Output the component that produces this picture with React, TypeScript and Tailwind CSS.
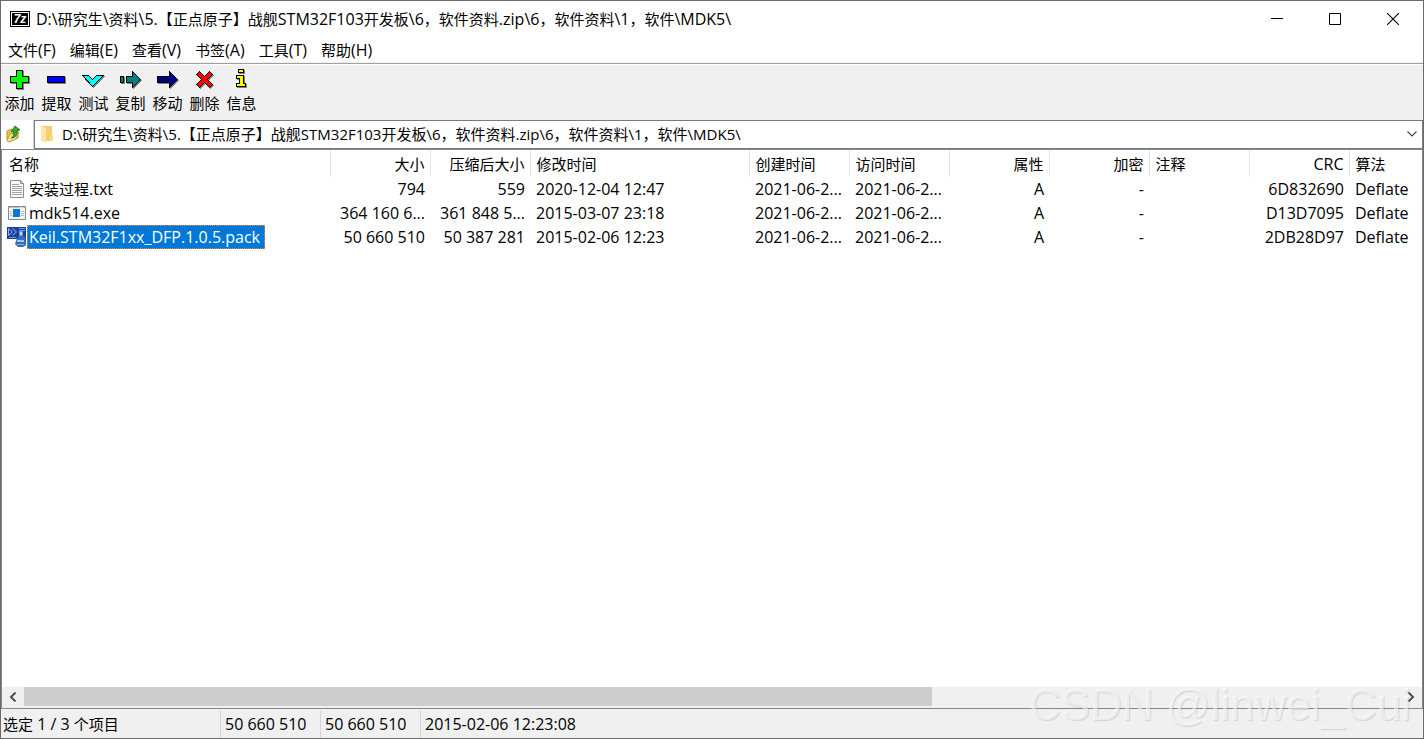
import React from 'react';

type FileRow = {
  icon: React.ReactNode;
  name: string;
  size: string;
  packed: string;
  modified: string;
  crc: string;
  selected?: boolean;
};

const archivePath =
  'D:\\研究生\\资料\\5.【正点原子】战舰STM32F103开发板\\6，软件资料.zip\\6，软件资料\\1，软件\\MDK5\\';

const menus = ['文件(F)', '编辑(E)', '查看(V)', '书签(A)', '工具(T)', '帮助(H)'];

// Latin runs are set one pixel larger than the Chinese text around them
function MixedText({ text }: { text: string }) {
  const runs = text.match(/[\x20-\x7e]+|[^\x20-\x7e]+/g) ?? [];
  return (
    <>
      {runs.map((run, index) => (
        <span key={index} className={run.charCodeAt(0) < 127 ? 'text-[16px] whitespace-pre' : 'text-[15px]'}>
          {run}
        </span>
      ))}
    </>
  );
}

// Toolbar glyphs share a 23x22 grid: a grey drop shadow under a black-outlined shape
function ToolIcon({ shapes, fill }: { shapes: string[]; fill: string }) {
  return (
    <svg viewBox="0 0 23 22" className="h-[22px] w-[23px]" aria-hidden="true">
      {shapes.map((points) => (
        <polygon key={`s${points}`} points={points} fill="#808080" stroke="#808080" transform="translate(1 1)" shapeRendering="crispEdges" />
      ))}
      {shapes.map((points) => (
        <polygon key={points} points={points} fill={fill} stroke="#000" shapeRendering="crispEdges" />
      ))}
    </svg>
  );
}

const tools = [
  { label: '添加', fill: '#00ff00', shapes: ['8.5,2.5 14.5,2.5 14.5,8.5 20.5,8.5 20.5,14.5 14.5,14.5 14.5,20.5 8.5,20.5 8.5,14.5 2.5,14.5 2.5,8.5 8.5,8.5'] },
  { label: '提取', fill: '#0000ff', shapes: ['2.5,8.5 19.5,8.5 19.5,14.5 2.5,14.5'] },
  { label: '测试', fill: '#00ffff', shapes: ['0.5,7.5 6.5,7.5 10.5,11.5 14.5,7.5 21.5,7.5 10.5,18.5'] },
  { label: '复制', fill: '#008080', shapes: ['1.5,8.5 4.5,8.5 4.5,14.5 1.5,14.5', '7.5,8.5 13.5,8.5 13.5,3.5 21.5,11.5 13.5,19.5 13.5,14.5 7.5,14.5'] },
  { label: '移动', fill: '#000080', shapes: ['1.5,8.5 13.5,8.5 13.5,3.5 21.5,11.5 13.5,19.5 13.5,14.5 1.5,14.5'] },
  { label: '删除', fill: '#ff0000', shapes: ['6.5,3.5 11.5,8.5 16.5,3.5 19.5,6.5 14.5,11.5 19.5,16.5 16.5,19.5 11.5,14.5 6.5,19.5 3.5,16.5 8.5,11.5 3.5,6.5'] },
  { label: '信息', fill: '#ffff00', shapes: ['8.5,1.5 13.5,1.5 13.5,4.5 8.5,4.5', '6.5,7.5 13.5,7.5 13.5,15.5 15.5,15.5 15.5,18.5 6.5,18.5 6.5,15.5 9.5,15.5 9.5,10.5 6.5,10.5'] },
];

function TextFileIcon() {
  return (
    <svg viewBox="0 0 20 20" className="size-5 shrink-0" aria-hidden="true">
      <path d="M3.500 1.500H13.500L16.500 4.500V18.500H3.500Z" fill="#fafafa" stroke="#8c8c8c" />
      <path d="M13.500 1.500V4.500H16.500" fill="none" stroke="#8c8c8c" />
      <path d="M5 5.500H12M5 7.500H15M5 9.500H15M5 11.500H15M5 13.500H15M5 15.500H15" stroke="#a3a3a3" />
    </svg>
  );
}

function ProgramIcon() {
  return (
    <svg viewBox="0 0 20 20" className="size-5 shrink-0" aria-hidden="true">
      <path d="M1.500 3.500H18.500V16.500H1.500Z" fill="#f4f4f4" stroke="#7f8a93" />
      <path d="M2 4.500H18" stroke="#b8c0c6" />
      <path d="M13 4.500H14M15 4.500H16" stroke="#fff" />
      <path d="M6 6H13V14H6Z" fill="#0078d7" />
      <path d="M3 8.500H5M3 10.500H5M3 12.500H5M14 8.500H17M14 10.500H17M14 12.500H17" stroke="#b4b9bd" />
    </svg>
  );
}

function PackIcon() {
  return (
    <svg viewBox="0 0 20 20" className="size-5 shrink-0" aria-hidden="true">
      <path d="M0 0H19V12H0Z" fill="#1b3fa0" />
      <path d="M1.500 1.500L5.500 5L1.500 8.500ZM5.500 1.500L9.500 5L5.500 8.500" fill="none" stroke="#8fb4ea" />
      <path d="M2 10.500H9" stroke="#6f9be0" />
      <path d="M12 1.500H18M12 3.500H18" stroke="#6f9be0" />
      <path d="M12 4L16 3V9L12 11Z" fill="#5f9bd8" />
      <path d="M10 11L13 9H17L19 12V18L16 20H11L8 17Z" fill="#2f6cba" />
      <path d="M13 5H15V8H13Z" fill="#b9d9f5" />
      <path d="M10 13H17V15H10Z" fill="#9cc7ee" />
      <path d="M10 17H17V18H10Z" fill="#7fb1e4" />
    </svg>
  );
}

const files: FileRow[] = [
  { icon: <TextFileIcon />, name: '安装过程.txt', size: '794', packed: '559', modified: '2020-12-04 12:47', crc: '6D832690' },
  { icon: <ProgramIcon />, name: 'mdk514.exe', size: '364 160 6...', packed: '361 848 5...', modified: '2015-03-07 23:18', crc: 'D13D7095' },
  { icon: <PackIcon />, name: 'Keil.STM32F1xx_DFP.1.0.5.pack', size: '50 660 510', packed: '50 387 281', modified: '2015-02-06 12:23', crc: '2DB28D97', selected: true },
];

const columns = [
  { label: '名称', width: 'w-[328px]', align: 'pl-[7px] text-left' },
  { label: '大小', width: 'w-[100px]', align: 'pr-[5px] text-right' },
  { label: '压缩后大小', width: 'w-[100px]', align: 'pr-[5px] text-right' },
  { label: '修改时间', width: 'w-[219px]', align: 'pl-[6px] text-left' },
  { label: '创建时间', width: 'w-[100px]', align: 'pl-[6px] text-left' },
  { label: '访问时间', width: 'w-[100px]', align: 'pl-[6px] text-left' },
  { label: '属性', width: 'w-[100px]', align: 'pr-[5px] text-right' },
  { label: '加密', width: 'w-[100px]', align: 'pr-[5px] text-right' },
  { label: '注释', width: 'w-[100px]', align: 'pl-[6px] text-left' },
  { label: 'CRC', width: 'w-[100px]', align: 'pr-[5px] text-right' },
  { label: '算法', width: 'w-auto', align: 'pl-[6px] text-left' },
];

function TitleBar() {
  return (
    <header className="flex h-9 items-center bg-white pr-px pl-[9px]">
      <span className="flex h-4 w-5 shrink-0 border border-black bg-white p-px">
        <span className="flex flex-1 items-center justify-center bg-black font-['Liberation_Sans'] text-[12px] leading-3 font-bold text-white italic">
          7z
        </span>
      </span>
      <h1 className="min-w-0 flex-1 truncate pl-[6px]">
        <MixedText text={archivePath} />
      </h1>
      <button type="button" aria-label="最小化" className="flex h-9 w-[58px] items-center justify-center">
        <svg viewBox="0 0 12 12" className="size-3"><path d="M0 5.500H12" stroke="#000" /></svg>
      </button>
      <button type="button" aria-label="最大化" className="flex h-9 w-[58px] items-center justify-center">
        <svg viewBox="0 0 12 12" className="size-3"><path d="M.5.5H11.500V11.500H.5Z" fill="none" stroke="#000" /></svg>
      </button>
      <button type="button" aria-label="关闭" className="flex h-9 w-[58px] items-center justify-center">
        <svg viewBox="0 0 12 12" className="size-3"><path d="M0 0L12 12M12 0L0 12" stroke="#000" strokeWidth="1.1" /></svg>
      </button>
    </header>
  );
}

function AddressBar() {
  return (
    <div className="flex h-[29px] bg-white">
      <button type="button" aria-label="上一级" className="flex w-[33px] items-center pb-px pl-1">
        <svg viewBox="0 0 18 18" className="size-[18px]" aria-hidden="true">
          <path d="M2 6L7 4L8 6L13 5V13L4 17L2 15Z" fill="#e9c252" stroke="#c09322" />
          <path d="M2 16L5 9L14 7L11 14L4 17Z" fill="#fbe28a" stroke="#c9a136" />
          <path d="M6 13C9 12 9 9 8 6L6 7L10 1L15 5L12 5C13 9 11 13 6 13Z" fill="#35a82d" stroke="#14701a" strokeWidth=".8" />
        </svg>
      </button>
      <div className="flex flex-1 items-center border border-[#7a7a7a] pb-px shadow-[-1px_0_0_#d0d0d0]">
        <svg viewBox="0 0 18 18" className="ml-[3px] size-[18px] shrink-0" aria-hidden="true">
          <path d="M3 1H14V16H3Z" fill="#f3cf72" />
          <path d="M3 1L8 3V18L3 16Z" fill="#ffe7a3" />
          <path d="M12 10H15V16H12Z" fill="#fbdc8b" />
        </svg>
        <input
          aria-label="地址"
          defaultValue={archivePath}
          className="min-w-0 flex-1 bg-transparent pl-[6px] outline-none"
        />
        <button type="button" aria-label="展开地址列表" className="flex w-5 items-center justify-center">
          <svg viewBox="0 0 10 6" className="h-[6px] w-[10px]"><path d="M.5.5L5 5L9.500.5" fill="none" stroke="#444" strokeWidth="1.1" /></svg>
        </button>
      </div>
    </div>
  );
}

function FileTable() {
  return (
    <table className="w-full table-fixed border-collapse">
      <thead>
        <tr className="h-[27px]">
          {columns.map((column) => (
            <th
              key={column.label}
              scope="col"
              className={`h-[27px] border-r border-[#e5e5e5] p-0 font-normal whitespace-nowrap last:border-r-0 ${column.width} ${column.align}`}
            >
              <MixedText text={column.label} />
            </th>
          ))}
        </tr>
      </thead>
      <tbody className="text-[16px]">
        {files.map((file) => {
          const cells = [
            file.size,
            file.packed,
            file.modified,
            '2021-06-2...',
            '2021-06-2...',
            'A',
            '-',
            '',
            file.crc,
            'Deflate',
          ];
          return (
            <tr key={file.name} className="h-6">
              <td className="p-0">
                <div className="flex h-6 items-center pl-[5px]">
                  {file.icon}
                  <span
                    className={
                      file.selected
                        ? 'flex h-6 items-center border border-dotted border-[#ff8728] bg-[#0078d7] pr-1 pl-px text-white'
                        : 'pl-[2px]'
                    }
                  >
                    <MixedText text={file.name} />
                  </span>
                </div>
              </td>
              {cells.map((cell, index) => (
                <td key={columns[index + 1].label} className={`p-0 whitespace-nowrap ${columns[index + 1].align}`}>
                  {cell}
                </td>
              ))}
            </tr>
          );
        })}
      </tbody>
    </table>
  );
}

function ScrollBar() {
  return (
    <div className="flex h-[21px] items-start bg-[#f0f0f0]">
      <button type="button" aria-label="向左滚动" className="flex h-[19px] w-[22px] items-center justify-center">
        <svg viewBox="0 0 8 10" className="h-[10px] w-2"><path d="M6.500.5L2 5L6.500 9.500" fill="none" stroke="#505050" strokeWidth="2" /></svg>
      </button>
      <div className="flex-1">
        <div className="h-[19px] w-[66%] bg-[#cdcdcd]" />
      </div>
      <button type="button" aria-label="向右滚动" className="flex h-[19px] w-[22px] items-center justify-center">
        <svg viewBox="0 0 8 10" className="h-[10px] w-2"><path d="M1.500.5L6 5L1.500 9.500" fill="none" stroke="#505050" strokeWidth="2" /></svg>
      </button>
    </div>
  );
}

export default function App() {
  return (
    <div className="relative flex min-h-screen flex-col border border-[#6b6b6b] bg-[#f0f0f0] font-['Open_Sans','Noto_Sans_CJK_SC',sans-serif] text-[15px] leading-5 text-black">
      <TitleBar />

      <nav className="flex h-[26px] items-center border-b border-[#f0f0f0] bg-white">
        {menus.map((menu) => (
          <button key={menu} type="button" className="px-[7px]">
            <MixedText text={menu} />
          </button>
        ))}
      </nav>

      <div className="flex h-[57px] border-t border-[#a0a0a0] pt-1 shadow-[inset_0_1px_0_#ffffff]">
        {tools.map((tool) => (
          <button key={tool.label} type="button" className="flex w-[37px] flex-col items-center">
            <ToolIcon shapes={tool.shapes} fill={tool.fill} />
            <span className="pt-[3px]">{tool.label}</span>
          </button>
        ))}
      </div>

      <AddressBar />

      <main className="flex flex-1 flex-col border border-[#828790] bg-white">
        <div className="flex-1 overflow-hidden">
          <FileTable />
        </div>
        <ScrollBar />
      </main>

      <footer className="flex h-[29px] items-center text-[16px]">
        <span className="flex h-[26px] w-[220px] items-center border-r border-[#d4d4d4] pl-[2px]">
          <MixedText text="选定 1 / 3 个项目" />
        </span>
        <span className="flex h-[26px] w-[100px] items-center border-r border-[#d4d4d4] pl-1">50 660 510</span>
        <span className="flex h-[26px] w-[100px] items-center border-r border-[#d4d4d4] pl-1">50 660 510</span>
        <span className="pl-1">2015-02-06 12:23:08</span>
      </footer>

      <div
        aria-hidden="true"
        className="pointer-events-none absolute right-3 bottom-2 font-['Liberation_Sans'] text-[44px] leading-[50px] text-white/60 [text-shadow:1px_1px_1px_rgba(0,0,0,0.12)]"
      >
        CSDN @linwei_Cui
      </div>
    </div>
  );
}
